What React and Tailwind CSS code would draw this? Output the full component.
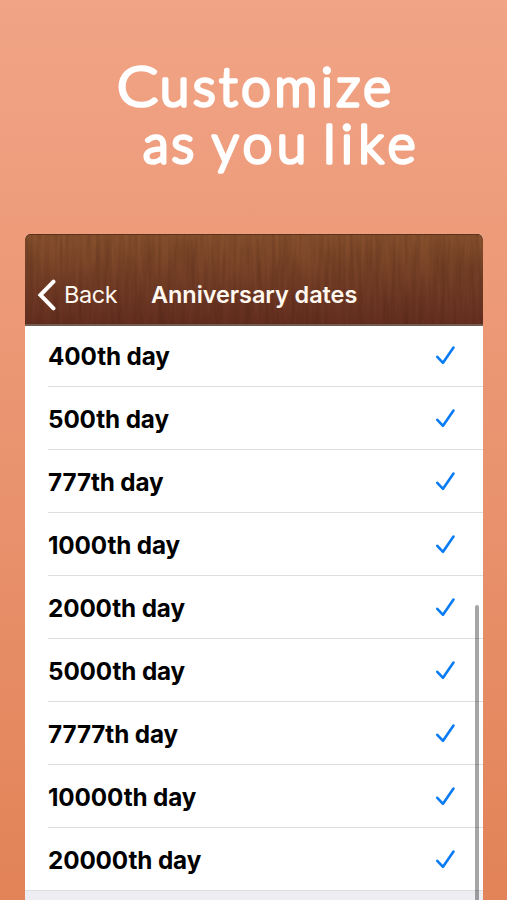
const DAYS = [
  '400th day',
  '500th day',
  '777th day',
  '1000th day',
  '2000th day',
  '5000th day',
  '7777th day',
  '10000th day',
  '20000th day',
];

function Headline() {
  return (
    <svg width="507" height="234" viewBox="0 0 507 234" className="block shrink-0">
      <g
        fill="white"
        stroke="white"
        strokeWidth="3.6"
        strokeLinejoin="round"
        strokeLinecap="round"
        fontFamily="Lato, sans-serif"
        fontWeight="300"
        fontSize="53"
      >
        <text x="117" y="105.5" fontSize="55" textLength="41" lengthAdjust="spacingAndGlyphs">C</text>
        <text x="160" y="105.5" textLength="231">ustomize</text>
        <text x="143" y="163" textLength="51">as</text>
        <text x="212" y="163" textLength="94">you</text>
        <text x="323.5" y="163" textLength="92">like</text>
      </g>
    </svg>
  );
}

function WoodGrain() {
  return (
    <svg className="absolute inset-0 h-full w-full" aria-hidden="true">
      <filter id="grain" x="0" y="0" width="100%" height="100%" colorInterpolationFilters="sRGB">
        <feTurbulence type="fractalNoise" baseFrequency="0.24 0.018" numOctaves="4" seed="8" />
        <feColorMatrix values="0 0 0 0 0.2  0 0 0 0 0.07  0 0 0 0 0.03  0.4 0 0 0 -0.12" />
      </filter>
      <rect width="100%" height="100%" filter="url(#grain)" />
    </svg>
  );
}

function Header() {
  return (
    <header className="relative h-[92px] shrink-0 overflow-hidden rounded-t-[5px] border-b-2 border-[#735b50] bg-linear-to-b from-[#87512d] to-[#642e20]">
      <WoodGrain />
      <div className="absolute inset-0 rounded-t-[5px] border-t-[1.5px] border-[#5c321d]" />
      <div className="relative flex h-full items-end pb-[13px] pl-3 text-2xl leading-8 text-[#fff8f0]">
        <svg width="20" height="32" viewBox="0 0 20 32" fill="none" className="mr-[7px]">
          <path d="M16.5 2.7 3.4 16 16.5 29.3" stroke="white" strokeWidth="4" strokeLinecap="round" />
        </svg>
        <span className="w-[87px] text-[23.5px] tracking-[-0.45px]">Back</span>
        <h1 className="text-[23.5px] font-semibold tracking-[-0.07px] whitespace-nowrap">Anniversary dates</h1>
      </div>
    </header>
  );
}

function DayRow({ label, last }) {
  return (
    <li className={'ml-[23px] flex h-[63px] items-center justify-between pr-[27px] ' + (last ? '' : 'border-b border-[#dedee0]')}>
      <span className="pt-[3px] text-[24.25px] leading-8 font-[650] tracking-[-0.12px] whitespace-nowrap text-black">
        {label}
      </span>
      <svg width="21" height="21" viewBox="0 0 21 21" fill="none">
        <path d="M2.3 11.8 8 17.8 18.5 2.5" stroke="#087bf5" strokeWidth="2.6" strokeLinecap="round" strokeLinejoin="round" />
      </svg>
    </li>
  );
}

export default function App() {
  return (
    <main className="flex h-[900px] w-[507px] flex-col overflow-hidden bg-linear-to-b from-[#f1a486] to-[#e28358] font-[Inter,sans-serif]">
      <Headline />
      <section className="relative mr-6 ml-[25px] flex flex-1 flex-col overflow-hidden rounded-t-[5px] bg-white">
        <Header />
        <ul className="-mt-[2px] shrink-0">
          {DAYS.map((label, i) => (
            <DayRow key={label} label={label} last={i === DAYS.length - 1} />
          ))}
        </ul>
        <div className="-mt-px h-3 shrink-0 border-t border-[#dedee2] bg-[#eeeef2]" />
        <div className="absolute top-[371px] right-[4px] h-[310px] w-[4px] rounded-full bg-black/35" />
      </section>
    </main>
  );
}
